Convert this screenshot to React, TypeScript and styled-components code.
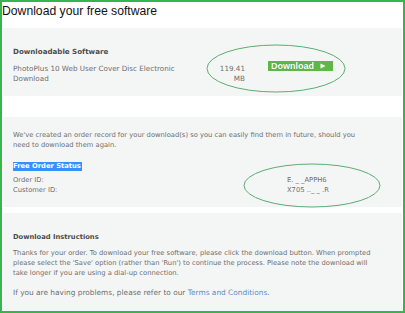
import React from "react";
import styled, { createGlobalStyle } from "styled-components";

const Global = createGlobalStyle`
  html, body { margin: 0; padding: 0; background: #fff; }
  body { width: 405px; height: 313px; overflow: hidden; }
`;

const Frame = styled.div`
  position: relative;
  box-sizing: border-box;
  width: 405px;
  height: 313px;
  border: 2px solid #35b54c;
  padding: 0 1px;
  display: flex;
  flex-direction: column;
  font-family: "DejaVu Sans", Verdana, sans-serif;
  font-size: 6.75px;
  line-height: 10px;
  color: #6e6e6e;
`;

const Title = styled.h1`
  margin: 0 0 0 -1px;
  height: 26px;
  font: 400 12.2px/18px "Liberation Sans", Arial, sans-serif;
  color: #111;
`;

const Panel = styled.section<{ $pt: number; $pb: number; $mt: number }>`
  background: #f4f6f6;
  margin-top: ${(p) => p.$mt}px;
  padding: ${(p) => p.$pt}px 10px ${(p) => p.$pb}px 10px;
  display: flex;
  flex-direction: column;
`;

const Heading = styled.div<{ $mb: number; $size?: number }>`
  font-weight: bold;
  color: #4c4c4c;
  font-size: ${(p) => p.$size ?? 6.75}px;
  margin-bottom: ${(p) => p.$mb}px;
  white-space: nowrap;
`;

const ProductRow = styled.div`
  display: flex;
  align-items: flex-start;
  font-size: 7.2px;
`;

const ProductName = styled.div`
  width: 170px;
`;

const Size = styled.div`
  width: 62px;
  text-align: right;
`;

const DownloadButton = styled.div`
  margin: -3px 0 0 23px;
  width: 65px;
  height: 10px;
  background: #5cb946;
  display: flex;
  align-items: center;
  box-sizing: border-box;
  padding-left: 3px;
  font: bold 9px/10px "Liberation Sans", Arial, sans-serif;
  color: #fff;
  text-shadow: 0 0 1px rgba(40, 110, 30, 0.6);
`;

const Arrow = styled.svg`
  margin-left: 6px;
  width: 6px;
  height: 6px;
`;

const Para = styled.div<{ $mb?: number; $size?: number }>`
  margin-bottom: ${(p) => p.$mb ?? 0}px;
  font-size: ${(p) => p.$size ?? 6.75}px;
  white-space: nowrap;
`;

const Selected = styled.span`
  align-self: flex-start;
  background: #3392ff;
  color: #fff;
  font-weight: bold;
  line-height: 9px;
  padding: 0 1px 0 0;
  margin: 0.5px 0 4.5px 0;
`;

const IdGrid = styled.div`
  display: grid;
  grid-template-columns: 274px 1fr;
`;

const Link = styled.a`
  color: #5a8dc2;
  text-decoration: none;
`;

const Annotations = styled.svg`
  position: absolute;
  left: -2px;
  top: -2px;
  width: 405px;
  height: 313px;
  pointer-events: none;
`;

export default function App() {
  return (
    <>
      <Global />
      <Frame>
        <Title>Download your free software</Title>
        <Panel $mt={0} $pt={19} $pb={12}>
          <Heading $mb={7} $size={7.1}>Downloadable Software</Heading>
          <ProductRow>
            <ProductName>PhotoPlus 10 Web User Cover Disc Electronic Download</ProductName>
            <Size>
              119.41
              <br />
              MB
            </Size>
            <DownloadButton>
              Download
              <Arrow viewBox="0 0 6 6">
                <polygon points="0.5,0.5 5.5,3 0.5,5.5" fill="#fff" />
              </Arrow>
            </DownloadButton>
          </ProductRow>
        </Panel>
        <Panel $mt={21} $pt={13} $pb={12}>
          <Para $mb={11}>
            We've created an order record for your download(s) so you can easily find them in future, should you
            <br />
            need to download them again.
          </Para>
          <Selected>Free Order Status</Selected>
          <IdGrid>
            <span>Order ID:</span>
            <span>E. _ _APPH6</span>
            <span>Customer ID:</span>
            <span>X705 .._ _ .R</span>
          </IdGrid>
        </Panel>
        <Panel $mt={6} $pt={19} $pb={13}>
          <Heading $mb={6}>Download Instructions</Heading>
          <Para $mb={10}>
            Thanks for your order. To download your free software, please click the download button. When prompted
            <br />
            please select the 'Save' option (rather than 'Run') to continue the process. Please note the download will
            <br />
            take longer if you are using a dial-up connection.
          </Para>
          <Para $size={7.4}>
            If you are having problems, please refer to our <Link href="#">Terms and Conditions</Link>.
          </Para>
        </Panel>
        <Annotations viewBox="0 0 405 313">
          <ellipse cx="276" cy="68.5" rx="69" ry="23.5" fill="none" stroke="#5aad6e" strokeWidth="1" />
          <ellipse cx="312" cy="185.5" rx="68" ry="21.5" fill="none" stroke="#5aad6e" strokeWidth="1" />
        </Annotations>
      </Frame>
    </>
  );
}
